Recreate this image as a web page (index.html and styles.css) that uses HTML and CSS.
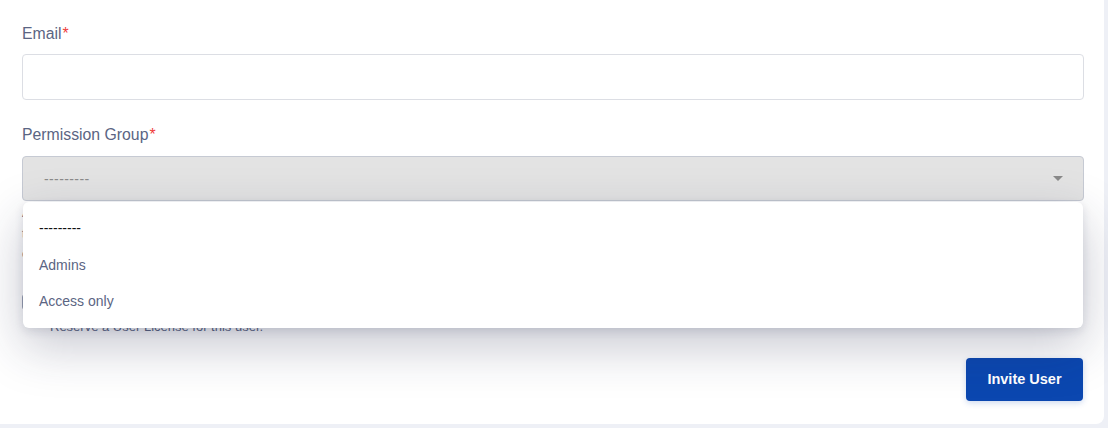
FILE: index.html
```html
<!DOCTYPE html>
<html>
<head>
<meta charset="utf-8">
<link rel="stylesheet" href="styles.css">
</head>
<body>
<div class="card">
  <div class="field">
    <label class="label">Email<span class="req">*</span></label>
    <div class="input"></div>
  </div>
  <div class="field">
    <label class="label label-perm">Permission Group<span class="req">*</span></label>
    <div class="select-wrap">
      <div class="select">
        <span class="placeholder">---------</span>
        <svg class="caret" width="10" height="6" viewBox="0 0 10 6"><path d="M0 0h10L5 5z" fill="#8a8a8a"/></svg>
      </div>
      <ul class="menu">
        <li class="opt opt-empty">---------</li>
        <li class="opt">Admins</li>
        <li class="opt">Access only</li>
      </ul>
    </div>
    <p class="help">Admins can manage users, billing and all settings of this account.<br>the Access only group can use the product but cannot change settings.<br>choose the group that fits the role of the new user.</p>
  </div>
  <div class="check-row">
    <span class="box"></span>
    <div class="check-text">
      <div class="check-label">Reserve license</div>
      <div class="check-desc">Reserve a User License for this user.</div>
    </div>
  </div>
  <div class="actions">
    <button class="btn">Invite User</button>
  </div>
</div>
</body>
</html>
```

FILE: styles.css
```css
html, body {
  margin: 0;
  padding: 0;
}
body {
  background: #eef0f6;
  font-family: "Liberation Sans", Arial, sans-serif;
  width: 1108px;
  height: 428px;
  overflow: hidden;
}
.card {
  background: #ffffff;
  width: 1104px;
  height: 424px;
  box-sizing: border-box;
  padding: 24px 20px 0 22px;
  border-radius: 0 0 8px 0;
}
.field {
  display: flex;
  flex-direction: column;
}
.label {
  font-size: 15.8px;
  color: #5b6583;
  line-height: 20px;
  margin-bottom: 10px;
}
.label-perm {
  margin-bottom: 11px;
}
.req {
  color: #ef3b3b;
  margin-left: 1px;
}
.input {
  height: 44px;
  border: 1px solid #dcdee4;
  border-radius: 4px;
  background: #fff;
  margin-bottom: 25px;
}
.select-wrap {
  position: relative;
}
.select {
  height: 43px;
  border: 1px solid #c6cad3;
  border-radius: 4px;
  background: #e3e3e3;
  display: flex;
  align-items: center;
  justify-content: space-between;
  padding: 0 20px 0 21px;
}
.placeholder {
  color: #8b8b8b;
  font-size: 14px;
  letter-spacing: 0.4px;
}
.caret {
  display: block;
}
.menu {
  position: absolute;
  top: 46px;
  left: 1px;
  right: 1px;
  margin: 0;
  padding: 8px 0 8px;
  list-style: none;
  background: #fff;
  border-radius: 6px;
  box-shadow: 0 18px 50px rgba(35, 40, 75, 0.26), 0 3px 10px rgba(35, 40, 75, 0.12);
  z-index: 5;
}
.opt {
  font-size: 14px;
  line-height: 36.5px;
  padding: 0 16px;
  color: #5b6583;
}
.opt-empty {
  color: #111;
}
.help {
  margin: 2px 0 0;
  font-size: 13px;
  line-height: 20.5px;
  color: #5b6583;
}
.check-row {
  display: flex;
  gap: 12px;
  margin-top: 26px;
}
.box {
  width: 14px;
  height: 14px;
  border: 1px solid #9aa1b2;
  border-radius: 3px;
  margin-top: 3px;
}
.check-label {
  font-size: 14px;
  color: #5b6583;
  line-height: 20px;
}
.check-desc {
  font-size: 13px;
  color: #5b6583;
  line-height: 20px;
  margin-top: 6px;
}
.actions {
  display: flex;
  justify-content: flex-end;
  margin-top: 21px;
  margin-right: 1px;
}
.btn {
  background: #0b47b0;
  color: #fff;
  border: none;
  border-radius: 4px;
  height: 43px;
  width: 117px;
  font-family: "Liberation Sans", Arial, sans-serif;
  font-weight: bold;
  font-size: 14.5px;
  box-shadow: 0 2px 6px rgba(11, 71, 176, 0.2);
}
```
